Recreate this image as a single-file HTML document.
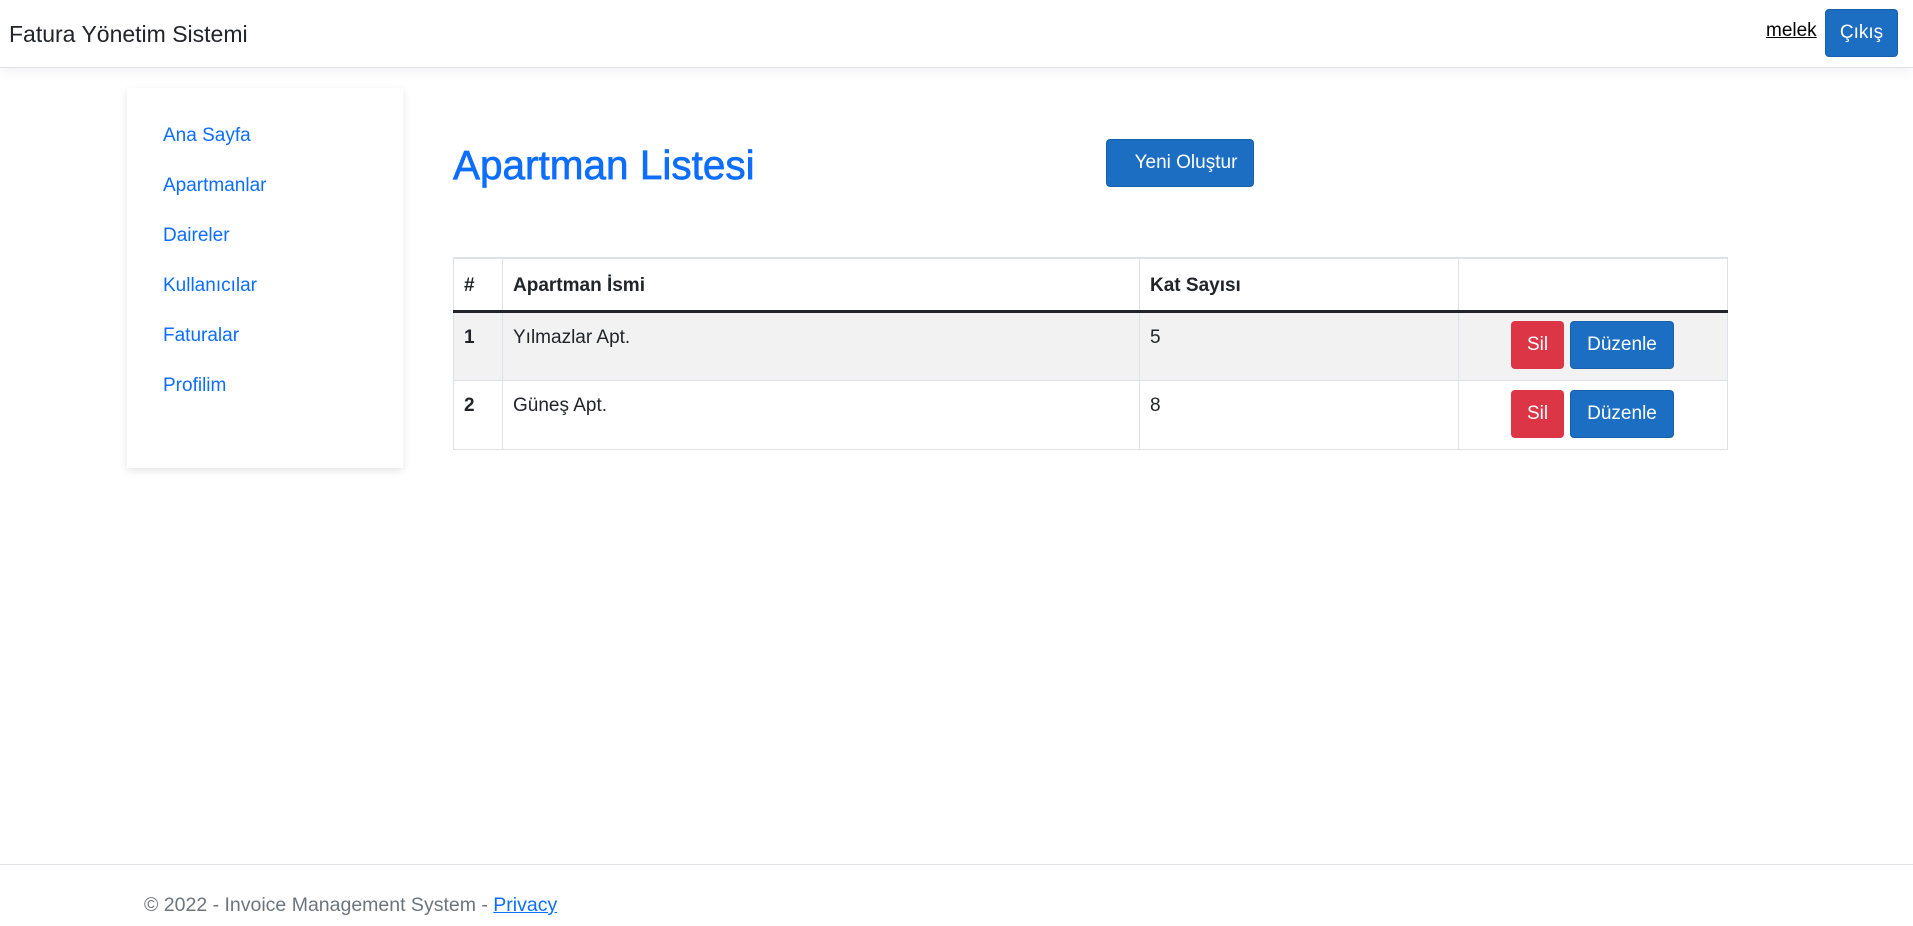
<!DOCTYPE html>
<html><head><meta charset="utf-8"><style>
*{box-sizing:border-box;margin:0;padding:0}
body{width:1913px;height:926px;position:relative;font-family:"Liberation Sans",sans-serif;color:#212529;background:#fff;overflow:hidden;font-size:19px}
.nav{position:absolute;left:0;top:0;width:1913px;height:68px;border-bottom:1px solid #dee2e6;box-shadow:0 4px 12px rgba(0,0,0,.05);background:#fff}
.brand{position:absolute;left:9px;top:21px;font-size:23px;color:#212529}
.melek{position:absolute;left:1766px;top:20px;font-size:19px;color:#000;text-decoration:underline}
.btn{position:absolute;color:#fff;border-radius:4px;font-size:19px;display:flex;align-items:center;justify-content:center}
.pri{background:#1b6ec2;border:1px solid #1861ac}
.dan{background:#dc3545}
.side{position:absolute;left:127px;top:88px;width:276px;height:380px;background:#fff;box-shadow:0 3px 8px rgba(0,0,0,.1)}
.side a{position:absolute;left:36px;color:#0d6efd;font-size:19px;text-decoration:none}
h2{position:absolute;left:453px;top:142px;font-size:40.5px;font-weight:normal;-webkit-text-stroke:0.7px #0d6efd;color:#0d6efd}
table{position:absolute;left:453px;top:257px;width:1275px;border-collapse:collapse;border:1px solid #dee2e6;border-top:2px solid #dee2e6;font-size:19px}
td,th{border-right:1px solid #dee2e6;text-align:left;vertical-align:top;padding:14px 10px 10px}
th{height:53px;padding-top:16px;border-bottom:3px solid #212529}
tr.r td{height:69px;border-bottom:1px solid #dee2e6}
tr.g td{background:#f2f2f2}
.foot{position:absolute;left:0;top:864px;width:1913px;border-top:1px solid #dee2e6}
.ft{position:absolute;left:144px;top:894px;color:#6c757d;font-size:19.5px}
.ft a{color:#0d6efd;text-decoration:underline}
</style></head><body>
<div class="nav"><div class="brand">Fatura Yönetim Sistemi</div>
<span class="melek">melek</span>
<div class="btn pri" style="left:1825px;top:9px;width:73px;height:48px">Çıkış</div></div>
<div class="side">
<a style="top:37px">Ana Sayfa</a><a style="top:87px">Apartmanlar</a><a style="top:137px">Daireler</a><a style="top:187px">Kullanıcılar</a><a style="top:237px">Faturalar</a><a style="top:287px">Profilim</a>
</div>
<h2>Apartman Listesi</h2>
<div class="btn pri" style="left:1106px;top:139px;width:148px;height:48px;padding-left:12px">Yeni Oluştur</div>
<table>
<tr><th style="width:49px">#</th><th style="width:637px">Apartman İsmi</th><th style="width:319px">Kat Sayısı</th><th style="border-right:none"></th></tr>
<tr class="r g"><td><b>1</b></td><td>Yılmazlar Apt.</td><td>5</td><td style="border-right:none"></td></tr>
<tr class="r"><td><b>2</b></td><td>Güneş Apt.</td><td>8</td><td style="border-right:none"></td></tr>
</table>
<div class="btn dan" style="left:1511px;top:321px;width:53px;height:48px">Sil</div>
<div class="btn pri" style="left:1570px;top:321px;width:104px;height:48px">Düzenle</div>
<div class="btn dan" style="left:1511px;top:390px;width:53px;height:48px">Sil</div>
<div class="btn pri" style="left:1570px;top:390px;width:104px;height:48px">Düzenle</div>
<div class="foot"></div>
<div class="ft">© 2022 - Invoice Management System - <a>Privacy</a></div>
</body></html>
